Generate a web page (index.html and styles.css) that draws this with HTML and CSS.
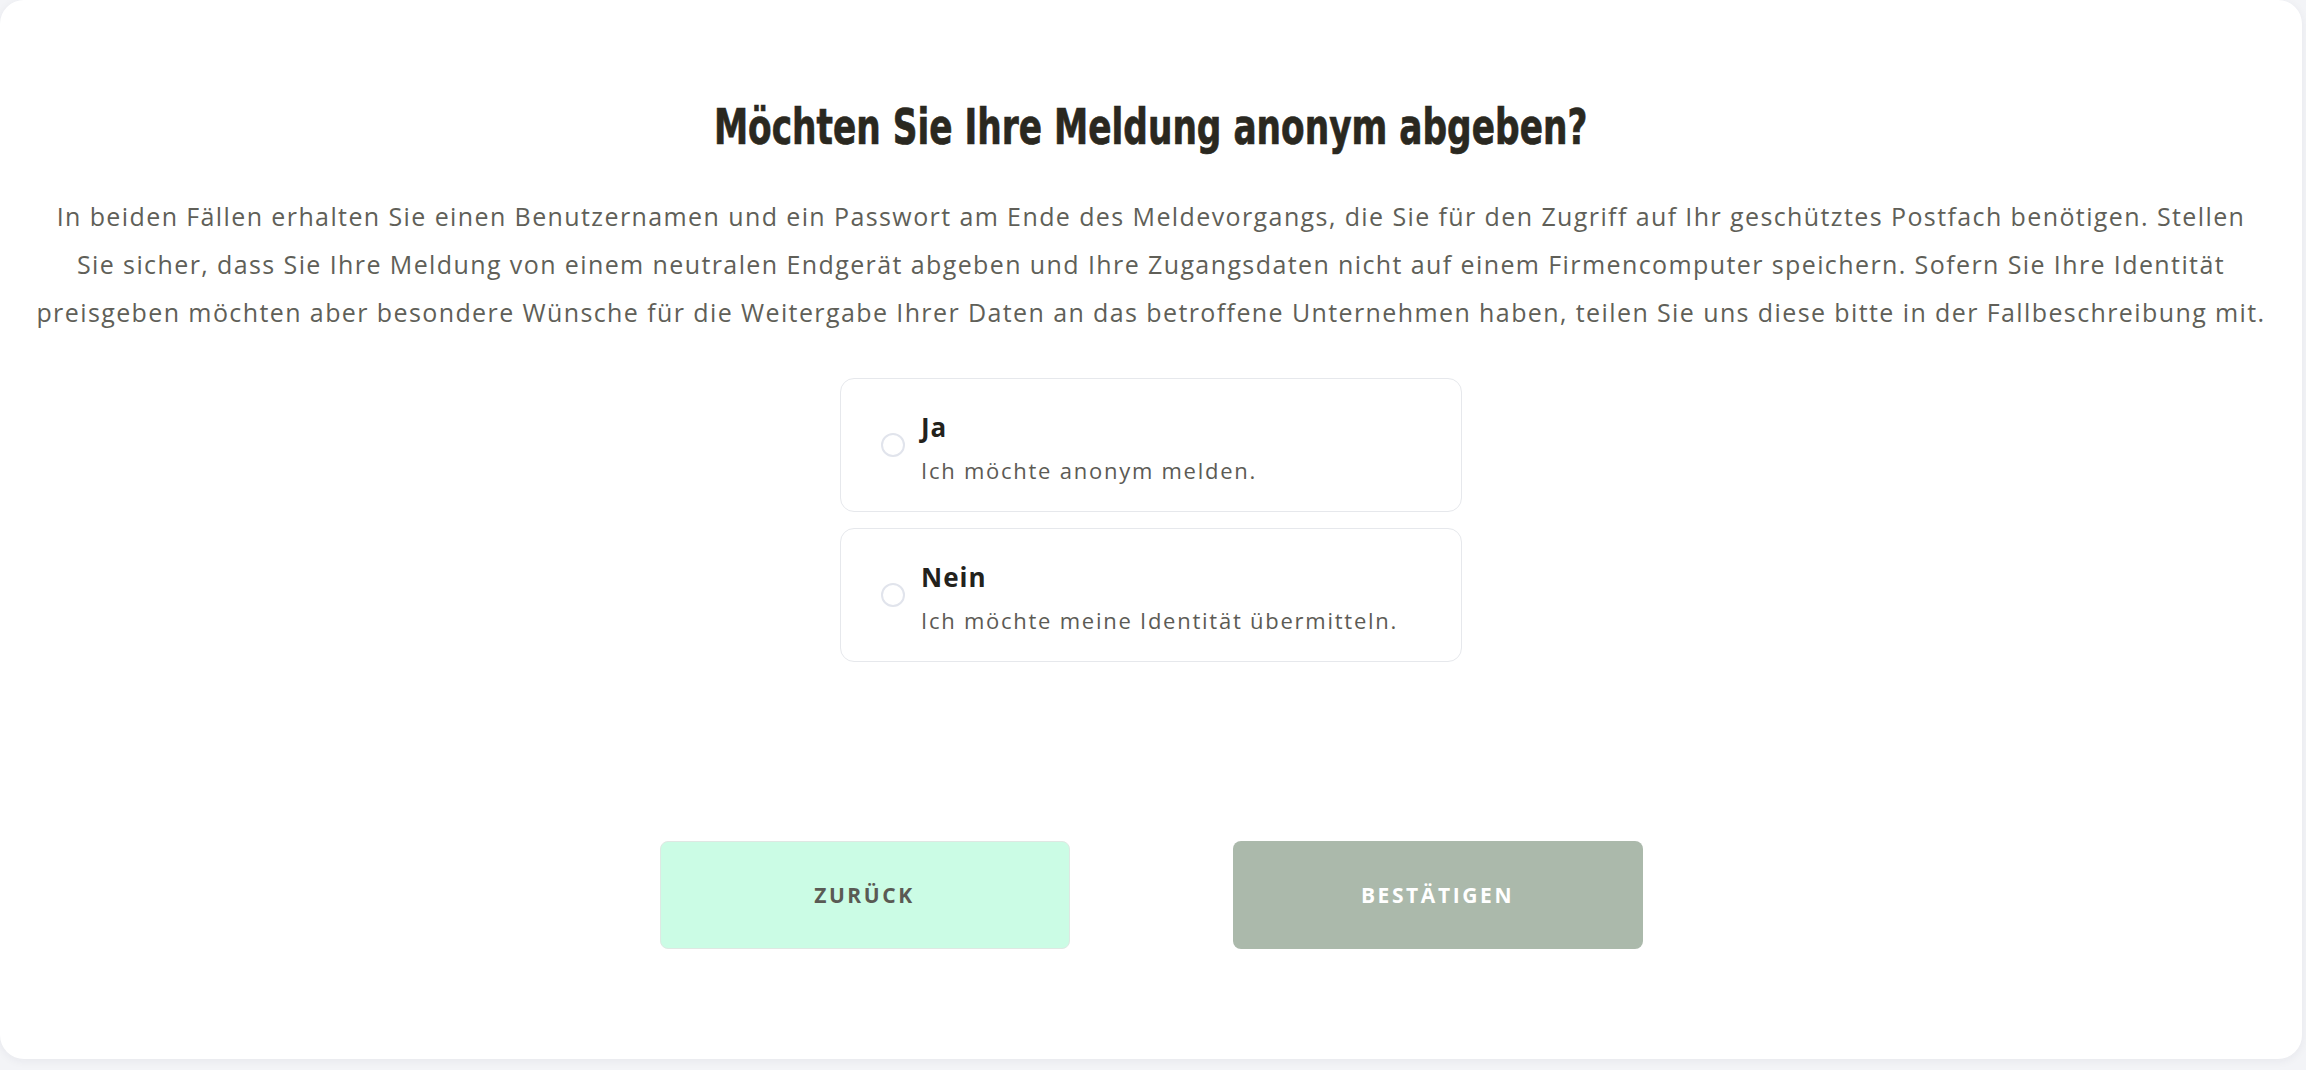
FILE: index.html
```html
<!DOCTYPE html>
<html lang="de">
<head>
<meta charset="utf-8">
<title>Anonym melden</title>
<link rel="stylesheet" href="styles.css">
</head>
<body>
<main class="card">
  <h1 class="title">Möchten Sie Ihre Meldung anonym abgeben?</h1>
  <p class="intro">In beiden Fällen erhalten Sie einen Benutzernamen und ein Passwort am Ende des Meldevorgangs, die Sie für den Zugriff auf Ihr geschütztes Postfach benötigen. Stellen<br>Sie sicher, dass Sie Ihre Meldung von einem neutralen Endgerät abgeben und Ihre Zugangsdaten nicht auf einem Firmencomputer speichern. Sofern Sie Ihre Identität<br>preisgeben möchten aber besondere Wünsche für die Weitergabe Ihrer Daten an das betroffene Unternehmen haben, teilen Sie uns diese bitte in der Fallbeschreibung mit.</p>
  <div class="options">
    <label class="option">
      <span class="radio"></span>
      <span class="option-text">
        <span class="option-title">Ja</span>
        <span class="option-desc">Ich möchte anonym melden.</span>
      </span>
    </label>
    <label class="option">
      <span class="radio"></span>
      <span class="option-text">
        <span class="option-title">Nein</span>
        <span class="option-desc">Ich möchte meine Identität übermitteln.</span>
      </span>
    </label>
  </div>
  <div class="actions">
    <button class="btn btn-back">ZURÜCK</button>
    <button class="btn btn-confirm">BESTÄTIGEN</button>
  </div>
</main>
</body>
</html>
```
FILE: styles.css
```css
* { box-sizing: border-box; }
html, body { margin: 0; padding: 0; }
body {
  background: #f3f4f7;
  width: 2306px;
  height: 1070px;
  overflow: hidden;
  font-family: "Open Sans", "Noto Sans", sans-serif;
}
.card {
  width: 2302px;
  height: 1059px;
  background: #ffffff;
  border-radius: 24px;
  box-shadow: 0 2px 10px rgba(30, 40, 60, 0.06);
  padding: 97px 20px 0;
  display: flex;
  flex-direction: column;
  align-items: center;
}
.title {
  margin: 0;
  font-family: "Liberation Sans Narrow", "DejaVu Sans Condensed", sans-serif;
  font-weight: 700;
  font-size: 50px;
  line-height: 60px;
  color: #2a2820;
  -webkit-text-stroke: 0.7px #2a2820;
  text-align: center;
  white-space: nowrap;
  transform: scaleX(0.764);
}
.intro {
  margin: 35px 0 0;
  font-size: 25px;
  line-height: 48px;
  letter-spacing: 1.4px;
  color: #605f58;
  text-align: center;
  white-space: nowrap;
}
.options {
  margin-top: 42px;
  display: flex;
  flex-direction: column;
  gap: 16px;
}
.option {
  width: 622px;
  height: 134px;
  border: 1px solid #e6e8ec;
  border-radius: 14px;
  display: flex;
  align-items: center;
  padding-left: 40px;
  gap: 16px;
}
.radio {
  width: 24px;
  height: 24px;
  border: 2px solid #e1e4ec;
  border-radius: 50%;
  flex: none;
}
.option-text {
  display: flex;
  flex-direction: column;
  padding-top: 6px;
}
.option-title {
  font-weight: 700;
  font-size: 26px;
  line-height: 32px;
  letter-spacing: 1px;
  color: #23221c;
}
.option-desc {
  margin-top: 12px;
  font-size: 22px;
  line-height: 30px;
  letter-spacing: 1.75px;
  color: #5c5b55;
}
.actions {
  margin-top: 179px;
  display: flex;
  gap: 163px;
}
.btn {
  width: 410px;
  height: 108px;
  border-radius: 8px;
  font-family: "Open Sans", "Noto Sans", sans-serif;
  font-weight: 700;
  font-size: 21px;
  letter-spacing: 2.6px;
  cursor: pointer;
}
.btn-back {
  background: #cbfce5;
  border: 1px solid #dfe8e3;
  color: #5a5a54;
}
.btn-confirm {
  background: #abb9ab;
  border: none;
  color: #ffffff;
}
```
